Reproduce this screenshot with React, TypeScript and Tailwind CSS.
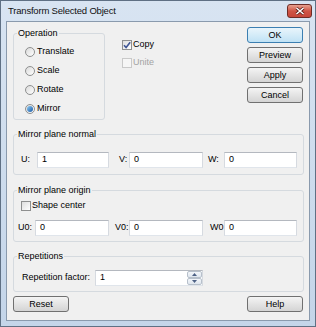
import React from 'react';

interface RadioProps {
  label: string;
  checked?: boolean;
}

function Radio({ label, checked = false }: RadioProps) {
  return (
    <div className="flex h-[19px] items-center gap-[2px]">
      <span className="flex h-[10px] w-[10px] items-center justify-center rounded-full border border-[#8e8f8f] bg-gradient-to-br from-[#dadada] to-[#ffffff]">
        {checked && (
          <span className="h-[6px] w-[6px] rounded-full bg-gradient-to-br from-[#8ccaf4] to-[#1a5aa4]" />
        )}
      </span>
      <span>{label}</span>
    </div>
  );
}

interface CheckProps {
  label: string;
  checked?: boolean;
  disabled?: boolean;
}

function Check({ label, checked = false, disabled = false }: CheckProps) {
  return (
    <div className="flex items-center gap-[1px]">
      <span
        className={`flex h-[10px] w-[10px] items-center justify-center border ${
          disabled
            ? 'border-[#c9c9c9] bg-[#f6f6f6]'
            : 'border-[#8e8f8f] bg-gradient-to-br from-[#dedede] to-[#ffffff]'
        }`}
      >
        {checked && (
          <svg width="8" height="8" viewBox="0 0 8 8" fill="none">
            <path d="M1 4.2L3.1 6.6L7.2 1.2" stroke="#3f5595" strokeWidth="1.6" />
          </svg>
        )}
      </span>
      <span className={disabled ? 'text-[#a3a3a3]' : ''}>{label}</span>
    </div>
  );
}

interface BtnProps {
  children: React.ReactNode;
  primary?: boolean;
}

function Btn({ children, primary = false }: BtnProps) {
  return (
    <button
      className={`flex h-[16px] w-[56px] items-center justify-center rounded-[3px] border leading-none ${
        primary
          ? 'border-[#3c7fb1] bg-gradient-to-b from-[#e9f5fc] to-[#c0e2f5]'
          : 'border-[#707070] bg-gradient-to-b from-[#f4f4f4] to-[#d4d4d4]'
      }`}
    >
      {children}
    </button>
  );
}

interface FieldProps {
  value: string;
  className?: string;
}

function Field({ value, className = '' }: FieldProps) {
  return (
    <div
      className={`flex h-[16px] shrink-0 items-center border border-[#b4b8bf] border-x-[#d6dae0] border-b-[#e0e5eb] bg-white pl-[4px] ${className}`}
    >
      {value}
    </div>
  );
}

interface GroupProps {
  title: string;
  className?: string;
  children: React.ReactNode;
}

function Group({ title, className = '', children }: GroupProps) {
  return (
    <fieldset className={`rounded-[3px] border border-[#d5dadf] ${className}`}>
      <legend className="ml-[3px] px-[1px] leading-[12px]">{title}</legend>
      {children}
    </fieldset>
  );
}

export default function App() {
  return (
    <div className="flex h-[327px] w-[316px] flex-col border border-[#5f7084] bg-gradient-to-b from-[#d8e4f2] to-[#c4d5e9] font-['Liberation_Sans',Arial,sans-serif] text-[9px] text-black">
      {/* Title bar */}
      <div className="flex h-[20px] shrink-0 items-center justify-between pl-[7px] pr-[3px]">
        <span className="text-[9.5px] tracking-[-0.2px] text-[#111]">Transform Selected Object</span>
        <div className="flex h-[14px] w-[25px] items-center justify-center rounded-[3px] border border-[#6e2c26] bg-gradient-to-b from-[#e7a08f] via-[#cf5546] to-[#c7473a]">
          <svg width="10" height="8" viewBox="0 0 10 8" fill="none">
            <path d="M1.5 1L8.5 7M8.5 1L1.5 7" stroke="#5a1e18" strokeWidth="3" />
            <path d="M1.5 1L8.5 7M8.5 1L1.5 7" stroke="#ffffff" strokeWidth="1.6" />
          </svg>
        </div>
      </div>

      {/* Client area */}
      <div className="mx-[5px] mb-[5px] flex flex-1 flex-col border border-[#8a9aad] bg-[#f0f0f0] pl-[6px] pr-[5px] pt-[5px]">
        {/* Top row */}
        <div className="flex items-start">
          <Group title="Operation" className="w-[92px]">
            <div className="pb-[1px] pl-[11px] pt-[3px]">
              <Radio label="Translate" />
              <Radio label="Scale" />
              <Radio label="Rotate" />
              <Radio label="Mirror" checked />
            </div>
          </Group>

          <div className="ml-[17px] mt-[9px] flex flex-col">
            <div className="flex h-[18px] items-center">
              <Check label="Copy" checked />
            </div>
            <div className="flex h-[18px] items-center">
              <Check label="Unite" disabled />
            </div>
          </div>

          <div className="ml-auto mr-[1px] flex flex-col gap-[4px]">
            <Btn primary>OK</Btn>
            <Btn>Preview</Btn>
            <Btn>Apply</Btn>
            <Btn>Cancel</Btn>
          </div>
        </div>

        {/* Mirror plane normal */}
        <Group title="Mirror plane normal" className="mt-[8px]">
          <div className="flex items-center pb-[6px] pl-[7px] pt-[12px]">
            <span className="w-[16px] shrink-0">U:</span>
            <Field value="1" className="w-[72px]" />
            <span className="ml-[10px] w-[10px] shrink-0">V:</span>
            <Field value="0" className="w-[74px]" />
            <span className="ml-[5px] w-[16px] shrink-0">W:</span>
            <Field value="0" className="w-[73px]" />
          </div>
        </Group>

        {/* Mirror plane origin */}
        <Group title="Mirror plane origin" className="mt-[9px]">
          <div className="flex flex-col pb-[5px] pt-[3px]">
            <div className="flex h-[14px] items-center pl-[7px]">
              <Check label="Shape center" />
            </div>
            <div className="mt-[7px] flex items-center pl-[4px]">
              <span className="w-[17px] shrink-0">U0:</span>
              <Field value="0" className="w-[74px]" />
              <span className="ml-[6px] w-[14px] shrink-0">V0:</span>
              <Field value="0" className="w-[74px]" />
              <span className="ml-[7px] w-[14px] shrink-0">W0</span>
              <Field value="0" className="w-[73px]" />
            </div>
          </div>
        </Group>

        {/* Repetitions */}
        <Group title="Repetitions" className="mt-[8px]">
          <div className="flex items-center pb-[5px] pl-[8px] pt-[8px]">
            <span className="w-[73px] shrink-0">Repetition factor:</span>
            <div className="flex h-[16px] w-[108px] shrink-0 items-center border border-[#b4b8bf] border-x-[#d6dae0] border-b-[#e0e5eb] bg-white">
              <span className="flex-1 pl-[4px]">1</span>
              <div className="flex h-full w-[15px] flex-col">
                <div className="flex flex-1 items-center justify-center rounded-[2px] border border-[#b7c0cb] bg-gradient-to-b from-[#f3f6fa] to-[#dfe6ee]">
                  <svg width="5" height="3" viewBox="0 0 5 3">
                    <path d="M0 3L2.5 0L5 3Z" fill="#4d6185" />
                  </svg>
                </div>
                <div className="flex flex-1 items-center justify-center rounded-[2px] border border-[#b7c0cb] bg-gradient-to-b from-[#f3f6fa] to-[#dfe6ee]">
                  <svg width="5" height="3" viewBox="0 0 5 3">
                    <path d="M0 0L2.5 3L5 0Z" fill="#4d6185" />
                  </svg>
                </div>
              </div>
            </div>
          </div>
        </Group>

        {/* Bottom buttons */}
        <div className="mt-[4px] flex justify-between pr-[1px]">
          <Btn>Reset</Btn>
          <Btn>Help</Btn>
        </div>
      </div>
    </div>
  );
}
